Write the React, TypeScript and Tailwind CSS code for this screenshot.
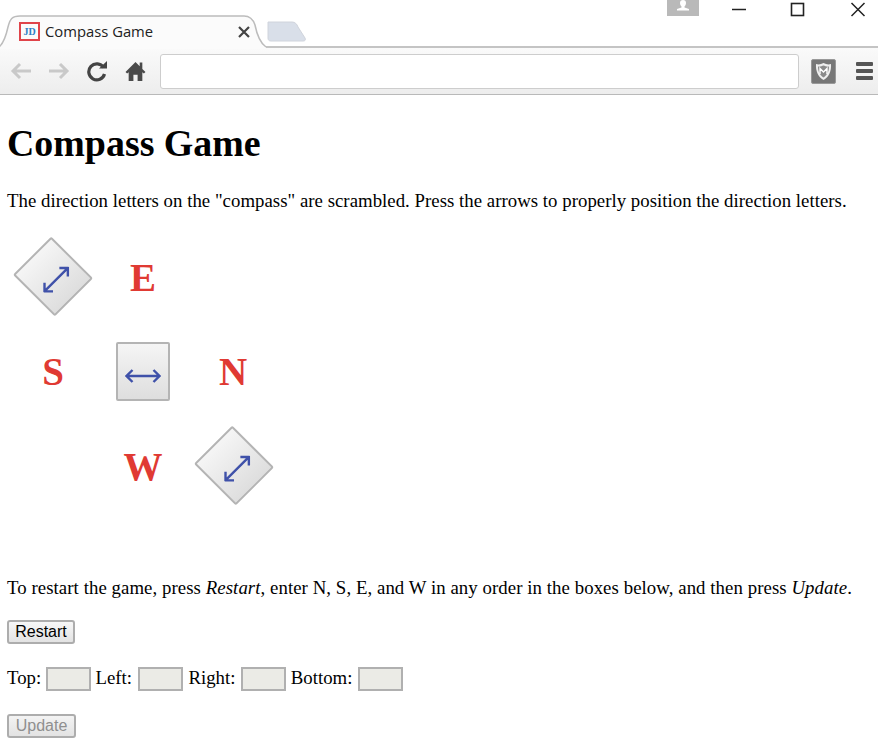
function ArrowBtn({ rotated, nudge }: { rotated?: boolean; nudge?: boolean }) {
  return (
    <button className={`w-[54px] h-[59px] flex items-center justify-center rounded-[2px] border-2 border-[#b4b4b4] bg-gradient-to-b from-[#f5f5f5] to-[#dedede] pt-[9px] ${rotated ? "-rotate-45 mb-[2px]" : ""} ${nudge ? "ml-[2px]" : ""}`}>
      <svg width="36" height="16" viewBox="0 0 36 16" fill="none" stroke="#3f51a9" strokeWidth="2.4">
        <path d="M1 8H35M7.5 2L1.5 8L7.5 14M28.5 2L34.5 8L28.5 14" />
      </svg>
    </button>
  );
}

function Letter({ children }: { children: string }) {
  return <div className="flex items-center justify-center text-[39px] font-bold text-[#e03a33] leading-none">{children}</div>;
}

function Cell({ children }: { children?: React.ReactNode }) {
  return <div className="flex items-center justify-center">{children}</div>;
}

function Field({ className }: { className: string }) {
  return <input disabled className={`w-[45px] h-[24px] border-2 border-[#b0b0b0] bg-[#ebebe6] align-middle ${className}`} />;
}

export default function App() {
  return (
    <div className="w-[878px] h-[744px] overflow-hidden bg-white text-black font-['Liberation_Serif',serif] text-[18.8px]">
      {/* tab strip */}
      <div className="relative h-[48px] flex items-end border-b-2 border-[#c4c4c4]">
        <div className="relative w-[265px] h-[33px] -mb-[2px] flex items-center pl-[19px] pr-[15px] font-['Open_Sans',sans-serif] text-[14.8px] text-[#222]">
          <svg className="absolute left-0 top-0" width="270" height="34" viewBox="0 0 270 34" fill="none">
            <path d="M0 32C4 28 6 22 8 12C10 4 12 1 20 1H244C250 1 253 4 255 10C257 20 260 28 266 32V34H0Z" fill="#fbfbfb" />
            <path d="M0 31C4 27 6 21 8 12C10 4 12 1 20 1H244C250 1 253 4 255 10C257 20 260 28 266 32" stroke="#bcbcbc" strokeWidth="1.5" />
          </svg>
          <span className="relative w-[21px] h-[19px] flex items-center justify-center border-2 border-[#e0444a] text-[10px] font-bold font-['Liberation_Serif',serif] text-[#2f7fc4] leading-none">JD</span>
          <span className="relative ml-[5px] flex-1 text-[#222]">Compass Game</span>
          <svg className="relative" width="12" height="12" viewBox="0 0 12 12" stroke="#444" strokeWidth="2.2">
            <path d="M1 1L11 11M11 1L1 11" />
          </svg>
        </div>
        <svg className="mb-[3px]" width="42" height="22" viewBox="0 0 42 22">
          <path d="M3 1H27C30 1 32 3 33 6L40 17C41 19 40 20 38 20H6C4 20 3 19 3 17Z" fill="#d9dfe9" stroke="#d0d4dc" />
        </svg>
        <div className="absolute left-[667px] top-0 w-[32px] h-[16px] bg-[#b9b9b9] flex justify-center">
          <svg width="14" height="12" viewBox="0 0 14 12" fill="#fff">
            <path d="M7 0C9 0 10 1 10 3C10 5 9 6 8.5 6.5V7.5L13 9V10.5H1V9L5.5 7.5V6.5C5 6 4 5 4 3C4 1 5 0 7 0Z" />
          </svg>
        </div>
        <svg className="absolute left-[731px] top-[1px]" width="140" height="16" viewBox="0 0 140 16" fill="none" stroke="#222" strokeWidth="1.5">
          <path d="M1 8.5H15" />
          <rect x="60.5" y="2.5" width="12" height="12" strokeWidth="1.6" />
          <path d="M120.5 2L133.5 15M133.5 2L120.5 15" />
        </svg>
      </div>
      {/* toolbar */}
      <div className="h-[47px] flex items-center bg-gradient-to-b from-[#fafafa] to-[#ededed] border-b border-[#b9b9b9] pl-[10px] pr-[4px]">
        <svg width="22" height="18" viewBox="0 0 22 18" fill="none" stroke="#c9c9c9" strokeWidth="3"><path d="M21 9H3M10 2L3 9L10 16" /></svg>
        <svg className="ml-[16px]" width="22" height="18" viewBox="0 0 22 18" fill="none" stroke="#c9c9c9" strokeWidth="3"><path d="M1 9H19M12 2L19 9L12 16" /></svg>
        <svg className="ml-[16px]" width="22" height="22" viewBox="0 0 22 22" fill="none">
          <path d="M17.5 7.5A8 8 0 1 0 18.5 14" stroke="#444" strokeWidth="3.2" />
          <path d="M13 8.5H21V1Z" fill="#444" />
        </svg>
        <svg className="ml-[17px]" width="21" height="21" viewBox="0 0 20 20" fill="#4a4a4a">
          <path d="M10 1L0.5 10.5L2 12L3.5 10.6V19H8V13H12V19H16.5V10.6L18 12L19.5 10.5L16.5 7.5V1.5H14V5Z" />
        </svg>
        <div className="ml-[14px] w-[639px] h-[35px] bg-white rounded-[3px] border border-[#cdcdcd]" />
        <div className="ml-[12px] w-[25px] h-[25px] rounded-[2px] bg-[#777] border border-[#999] flex items-center justify-center">
          <svg width="19" height="20" viewBox="0 0 19 20">
            <path d="M2 3C5 4 7 3 9.5 2C12 3 14 4 17 3C17.5 10 15 16 9.5 19C4 16 1.5 10 2 3Z" fill="#eee" />
            <path d="M4 5.5C6 6 8 5 9.5 4.5C11 5 13 6 15 5.5C15 10 13.5 14 9.5 16.5C5.5 14 4 10 4 5.5Z" fill="#8a8a8a" />
            <path d="M6 13V7.5L9.5 11L13 7.5V13" fill="none" stroke="#fff" strokeWidth="1.4" />
          </svg>
        </div>
        <div className="ml-[20px] w-[17px] flex flex-col gap-[3px]">
          <div className="h-[4px] rounded-[1px] bg-[#555]" />
          <div className="h-[4px] rounded-[1px] bg-[#555]" />
          <div className="h-[4px] rounded-[1px] bg-[#555]" />
        </div>
      </div>
      {/* page */}
      <div className="pl-[7px] pt-[27px]">
        <h1 className="text-[37.9px] font-bold leading-[42px]">Compass Game</h1>
        <p className="mt-[26px] leading-[21px] tracking-[0.03px] whitespace-nowrap">The direction letters on the "compass" are scrambled. Press the arrows to properly position the direction letters.</p>
        <div className="mt-[19px] ml-[1px] w-[270px] grid grid-cols-3 grid-rows-[94.5px_94.5px_94.5px]">
          <Cell><ArrowBtn rotated /></Cell>
          <Letter>E</Letter>
          <Cell />
          <Letter>S</Letter>
          <Cell><ArrowBtn /></Cell>
          <Letter>N</Letter>
          <Cell />
          <Letter>W</Letter>
          <Cell><ArrowBtn rotated nudge /></Cell>
        </div>
        <p className="mt-[63px] leading-[21px] tracking-[0.07px] whitespace-nowrap">To restart the game, press <i>Restart</i>, enter N, S, E, and W in any order in the boxes below, and then press <i>Update</i>.</p>
        <button className="block mt-[22px] w-[68px] h-[24px] rounded-[3px] border-2 border-[#adadad] bg-gradient-to-b from-[#f7f7f7] to-[#e3e3e3] font-['Liberation_Sans',sans-serif] text-[16px] leading-none text-black">Restart</button>
        <div className="mt-[23px] h-[24px] flex items-center whitespace-pre">
          <span>Top: </span><Field className="ml-0 mr-0" /><span> Left: </span><Field className="ml-[1px] mr-[1px]" /><span> Right: </span><Field className="ml-[1px] mr-0" /><span> Bottom: </span><Field className="ml-[1px]" />
        </div>
        <button disabled className="block mt-[23px] w-[69px] h-[24px] rounded-[3px] border-2 border-[#adadad] bg-gradient-to-b from-[#f3f3f3] to-[#e3e3e3] font-['Liberation_Sans',sans-serif] font-normal text-[16px] leading-none text-[#8f8f8f]">Update</button>
      </div>
    </div>
  );
}
